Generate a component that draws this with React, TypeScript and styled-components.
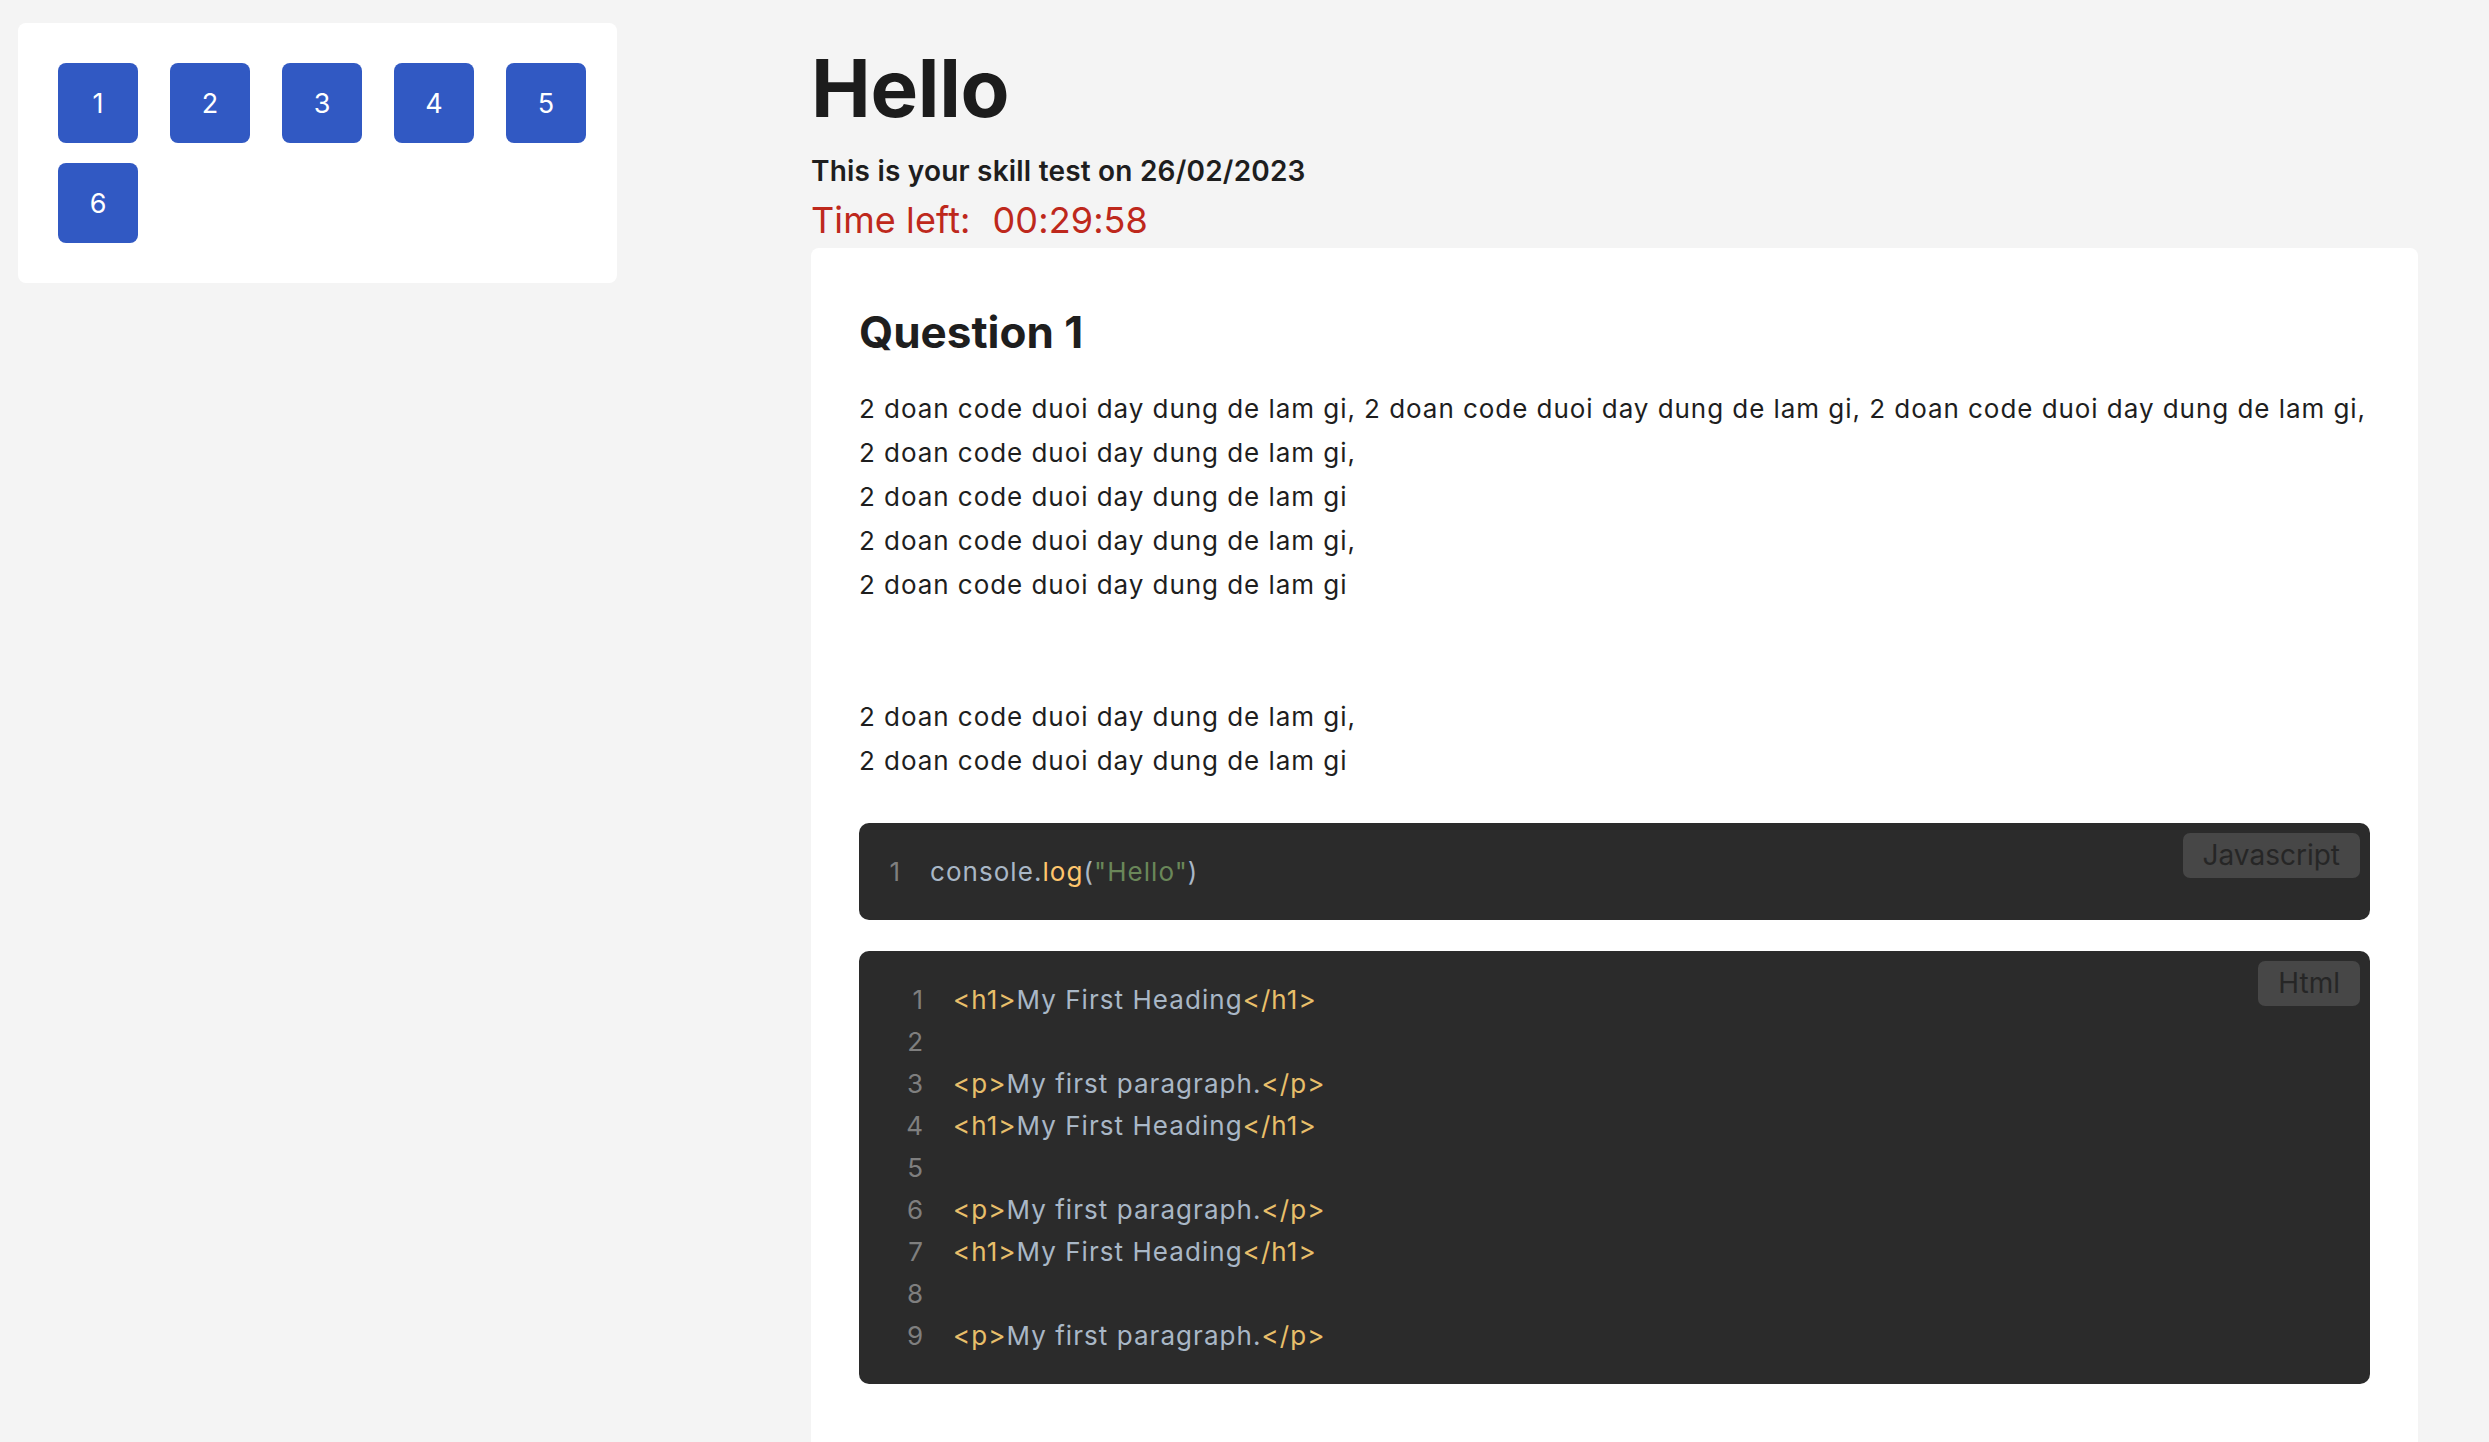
import React from "react";
import styled, { createGlobalStyle } from "styled-components";

const GlobalStyle = createGlobalStyle`
  html, body {
    margin: 0;
    padding: 0;
    background: #f4f4f4;
    font-family: Inter, "Noto Sans", "Liberation Sans", sans-serif;
    color: #1e1e1e;
  }
  * { box-sizing: border-box; }
`;

const Page = styled.div`
  display: grid;
  grid-template-columns: 599px 1fr;
  column-gap: 194px;
  align-items: start;
  padding: 23px 71px 0 18px;
  min-height: 100vh;
`;

const Sidebar = styled.aside`
  background: #ffffff;
  border-radius: 8px;
  padding: 40px;
`;

const QuestionGrid = styled.div`
  display: grid;
  grid-template-columns: repeat(5, 80px);
  column-gap: 32px;
  row-gap: 20px;
`;

const QuestionButton = styled.button`
  width: 80px;
  height: 80px;
  border: none;
  border-radius: 8px;
  background: #3159c3;
  color: #ffffff;
  font-family: Inter, "Liberation Sans", sans-serif;
  font-size: 27px;
  font-weight: 400;
  display: flex;
  align-items: center;
  justify-content: center;
  padding: 0;
  cursor: pointer;
`;

const Main = styled.main`
  display: flex;
  flex-direction: column;
  padding-top: 16px;
`;

const Title = styled.h1`
  margin: 0;
  font-size: 80px;
  font-weight: 700;
  line-height: normal;
  color: #1c1c1c;
  letter-spacing: -0.3px;
`;

const Subtitle = styled.div`
  margin-top: 18px;
  font-size: 28px;
  font-weight: 600;
  line-height: normal;
  color: #1e1e1e;
  letter-spacing: 0.2px;
`;

const Timer = styled.div`
  margin-top: 10px;
  font-size: 36px;
  font-weight: 400;
  line-height: normal;
  color: #be281c;
  letter-spacing: 0.1px;
`;

const TimerValue = styled.span`
  margin-left: 22px;
`;

const QuestionCard = styled.section`
  margin-top: 6px;
  background: #ffffff;
  border-radius: 8px;
  padding: 57px 48px 90px;
`;

const QuestionTitle = styled.h2`
  margin: 0;
  font-size: 44px;
  font-weight: 700;
  line-height: normal;
  color: #1e1e1e;
`;

const QuestionText = styled.p`
  margin: 28px 0 0;
  font-size: 26px;
  line-height: 44px;
  letter-spacing: 0.95px;
  color: #1e1e1e;
`;

const CodeBox = styled.div<{ $first?: boolean }>`
  position: relative;
  margin-top: ${(p) => (p.$first ? "40px" : "31px")};
  background: #2b2b2b;
  border-radius: 10px;
  padding: 27.5px 0;
  font-size: 26px;
  line-height: 42px;
`;

const LangBadge = styled.span`
  position: absolute;
  top: 10px;
  right: 10px;
  background: #474747;
  color: #262626;
  border-radius: 7px;
  font-size: 28px;
  line-height: 35px;
  padding: 5px 20px;
`;

const CodeLine = styled.div<{ $inset: number }>`
  display: flex;
  padding-left: ${(p) => p.$inset}px;
  min-height: 42px;
  white-space: pre;
`;

const LineNo = styled.span`
  display: inline-block;
  width: 30px;
  margin-right: 30px;
  text-align: right;
  color: #7f7f7f;
`;

const CodeText = styled.span`
  letter-spacing: 1.05px;
`;

const Tok = styled.span<{ $kind: "plain" | "fn" | "str" | "tag" }>`
  color: ${(p) =>
    p.$kind === "fn"
      ? "#ffc66d"
      : p.$kind === "str"
      ? "#6a8759"
      : p.$kind === "tag"
      ? "#e8bf6a"
      : "#a9b7c6"};
`;

type Token = [string, "plain" | "fn" | "str" | "tag"];

const CodeBlock: React.FC<{
  lang: string;
  lines: Token[][];
  inset: number;
  first?: boolean;
}> = ({ lang, lines, inset, first }) => (
  <CodeBox $first={first}>
    <LangBadge>{lang}</LangBadge>
    {lines.map((toks, i) => (
      <CodeLine key={i} $inset={inset}>
        <LineNo>{i + 1}</LineNo>
        <CodeText>
          {toks.map(([t, k], j) => (
            <Tok key={j} $kind={k}>
              {t}
            </Tok>
          ))}
        </CodeText>
      </CodeLine>
    ))}
  </CodeBox>
);

const h1Line: Token[] = [
  ["<h1>", "tag"],
  ["My First Heading", "plain"],
  ["</h1>", "tag"],
];
const pLine: Token[] = [
  ["<p>", "tag"],
  ["My first paragraph.", "plain"],
  ["</p>", "tag"],
];

const jsLines: Token[][] = [
  [
    ["console.", "plain"],
    ["log", "fn"],
    ["(", "plain"],
    ['"Hello"', "str"],
    [")", "plain"],
  ],
];

const htmlLines: Token[][] = [h1Line, [], pLine, h1Line, [], pLine, h1Line, [], pLine];

const sentence = "2 doan code duoi day dung de lam gi";

export default function App() {
  return (
    <>
      <GlobalStyle />
      <Page>
        <Sidebar>
          <QuestionGrid>
            {[1, 2, 3, 4, 5, 6].map((n) => (
              <QuestionButton key={n}>{n}</QuestionButton>
            ))}
          </QuestionGrid>
        </Sidebar>
        <Main>
          <Title>Hello</Title>
          <Subtitle>This is your skill test on 26/02/2023</Subtitle>
          <Timer>
            Time left:<TimerValue>00:29:58</TimerValue>
          </Timer>
          <QuestionCard>
            <QuestionTitle>Question 1</QuestionTitle>
            <QuestionText>
              {sentence}, {sentence}, {sentence},
              <br />
              {sentence},
              <br />
              {sentence}
              <br />
              {sentence},
              <br />
              {sentence}
              <br />
              <br />
              <br />
              {sentence},
              <br />
              {sentence}
            </QuestionText>
            <CodeBlock first lang="Javascript" lines={jsLines} inset={11} />
            <CodeBlock lang="Html" lines={htmlLines} inset={34} />
          </QuestionCard>
        </Main>
      </Page>
    </>
  );
}
